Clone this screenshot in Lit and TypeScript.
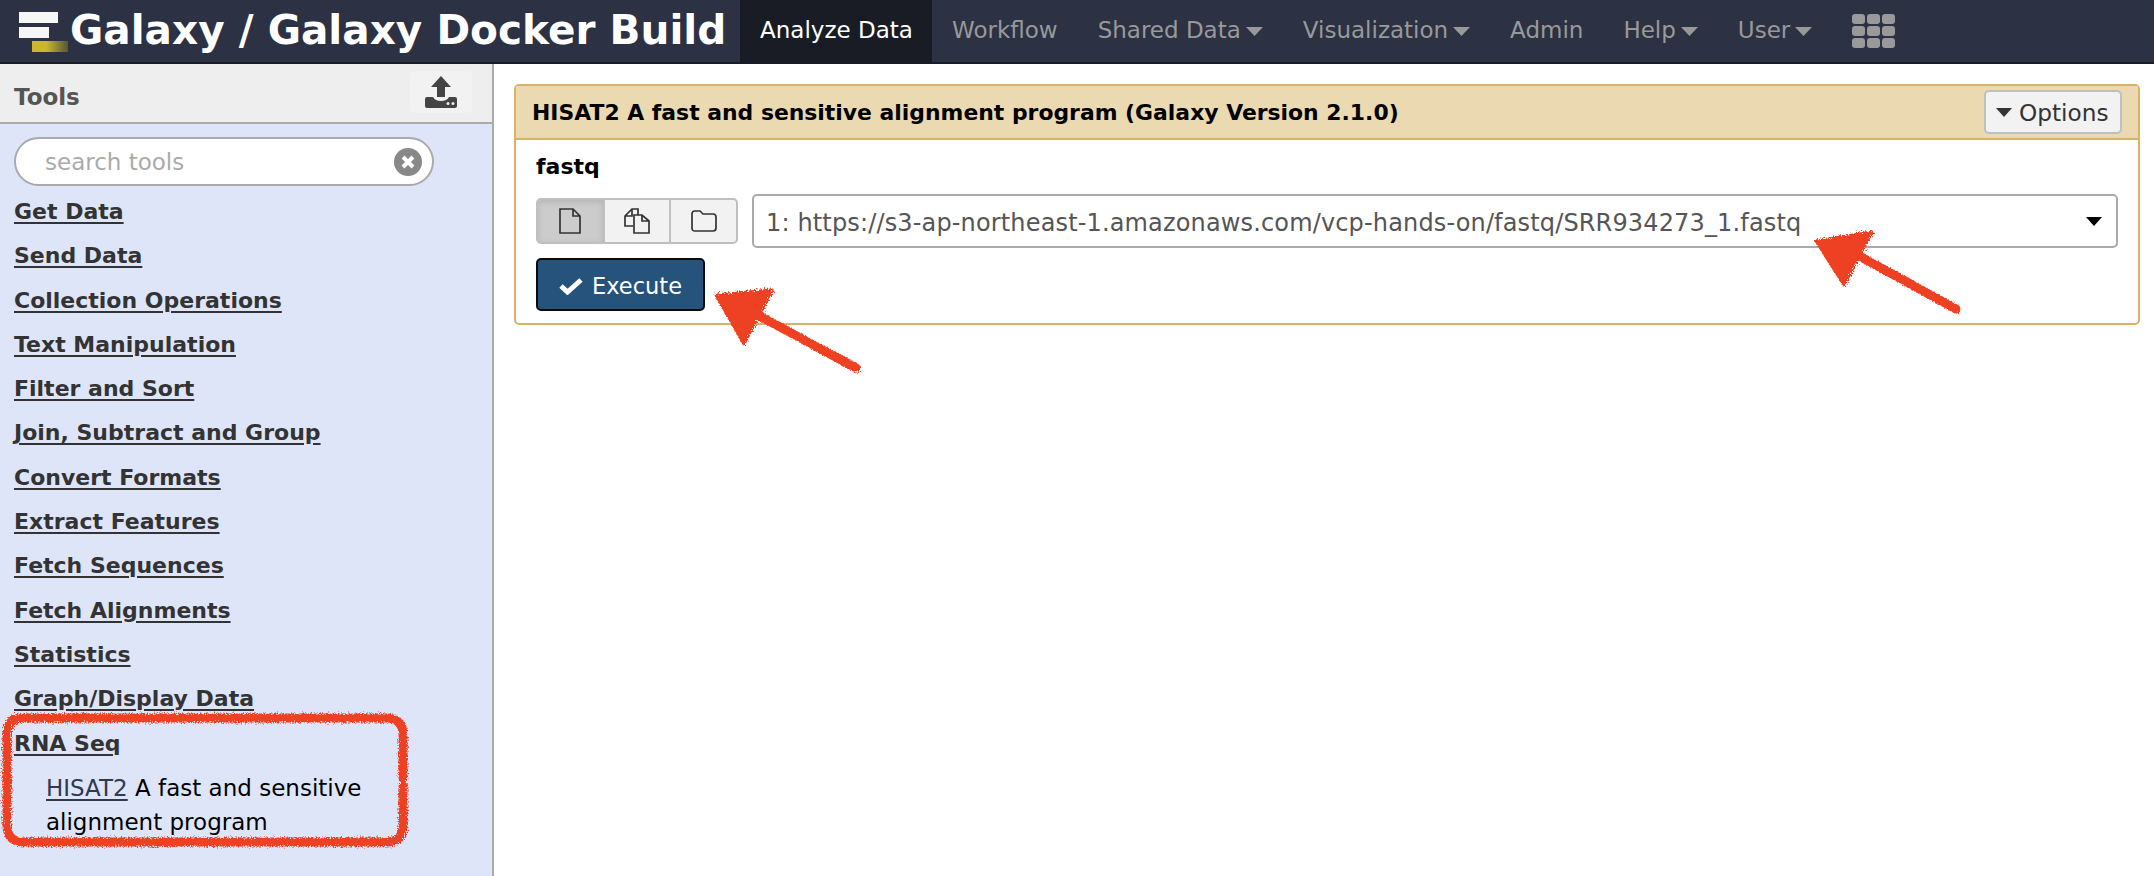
import { LitElement, html, css, svg } from 'lit';
import { customElement } from 'lit/decorators.js';

const SECTIONS = [
  'Get Data',
  'Send Data',
  'Collection Operations',
  'Text Manipulation',
  'Filter and Sort',
  'Join, Subtract and Group',
  'Convert Formats',
  'Extract Features',
  'Fetch Sequences',
  'Fetch Alignments',
  'Statistics',
  'Graph/Display Data',
  'RNA Seq',
];

const caret = html`<svg class="caret" width="17" height="9" viewBox="0 0 17 9"><path d="M0 0h17L8.5 9z" /></svg>`;

@customElement('app-root')
export class AppRoot extends LitElement {
  static styles = css`
    :host {
      display: block;
      position: relative;
      width: 2154px;
      height: 876px;
      overflow: hidden;
      background: #fff;
      font-family: 'DejaVu Sans', sans-serif;
      color: #000;
    }

    /* top bar */
    .nav {
      display: flex;
      align-items: stretch;
      height: 64px;
      background: #2c3143;
      border-bottom: 2px solid #1a1c25;
      box-sizing: border-box;
    }
    .brand {
      display: flex;
      align-items: center;
      width: 740px;
      padding: 0 0 2px 18px;
      box-sizing: border-box;
      color: #fff;
      font-size: 40.6px;
      font-weight: 700;
      white-space: nowrap;
    }
    .logo {
      flex: none;
      margin-top: 2px;
    }
    .tab {
      display: flex;
      align-items: center;
      gap: 5px;
      padding-bottom: 2px;
      font-size: 23px;
      color: #999;
      white-space: nowrap;
    }
    .tab.active {
      background: #1a1c25;
      color: #fff;
      padding: 0 20px 2px;
      width: 192px;
      box-sizing: border-box;
    }
    .tab svg.caret {
      fill: #999;
      margin-top: 2px;
    }
    .menus {
      display: flex;
      gap: 40px;
      padding-left: 20px;
    }
    .apps {
      display: grid;
      grid-template-columns: repeat(3, 13px);
      grid-auto-rows: 10px;
      gap: 2px;
      align-self: center;
    }
    .apps i {
      background: #999;
      border-radius: 3px;
    }

    /* body */
    .body {
      display: flex;
      height: 812px;
    }
    .side {
      flex: none;
      width: 494px;
      box-sizing: border-box;
      background: #dfe5f9;
      border-right: 2px solid #aaa;
    }
    .side-head {
      display: flex;
      align-items: center;
      justify-content: space-between;
      height: 60px;
      box-sizing: border-box;
      padding: 0 20px 0 14px;
      background: #eee;
      border-bottom: 2px solid #aaa;
      font-size: 23px;
      font-weight: 700;
      color: #555;
    }
    .side-head span {
      margin-top: 7px;
    }
    .upload {
      display: flex;
      align-items: center;
      justify-content: center;
      width: 62px;
      height: 42px;
      background: #f2f2f2;
      border-radius: 5px;
      margin-top: -2px;
    }
    .search {
      display: flex;
      align-items: center;
      justify-content: space-between;
      width: 420px;
      height: 49px;
      margin: 13px 0 0 14px;
      padding: 0 10px 0 29px;
      box-sizing: border-box;
      background: #fff;
      border: 2px solid #aaa;
      border-radius: 25px;
      font-size: 23px;
      color: #aaa;
    }
    .tools {
      padding: 0 14px;
      margin-top: 4px;
    }
    .section {
      height: 44.3px;
      line-height: 44.3px;
      font-size: 22px;
      font-weight: 700;
      color: #333;
    }
    .section span,
    .tool a {
      text-decoration: underline;
      text-underline-offset: 3px;
    }
    .tool {
      width: 360px;
      padding-left: 32px;
      font-size: 23px;
      line-height: 34px;
      margin-top: 5px;
    }
    .tool a {
      color: #303a4f;
    }

    /* main panel */
    .main {
      flex: 1;
      padding: 20px 14px 0 20px;
    }
    .panel {
      height: 241px;
      box-sizing: border-box;
      border: 2px solid #d8b365;
      border-radius: 5px;
    }
    .panel-head {
      display: flex;
      align-items: center;
      justify-content: space-between;
      height: 54px;
      box-sizing: border-box;
      padding: 0 16px;
      background: #ebd9b2;
      border-bottom: 2px solid #d8b365;
      font-size: 21.9px;
      font-weight: 700;
    }
    .options {
      display: flex;
      align-items: center;
      gap: 7px;
      width: 138px;
      height: 44px;
      box-sizing: border-box;
      padding-left: 10px;
      background: #f2f2f2;
      border: 2px solid #bfbfbf;
      border-radius: 5px;
      font-size: 23.2px;
      font-weight: 400;
      color: #333;
    }
    .panel-body {
      padding: 12px 20px 0;
    }
    .label {
      font-size: 22px;
      font-weight: 700;
      line-height: 30px;
    }
    .row {
      display: flex;
      align-items: center;
      gap: 14px;
      margin-top: 12px;
    }
    .group {
      display: flex;
      width: 202px;
      height: 46px;
      box-sizing: border-box;
      background: #f2f2f2;
      border: 2px solid #bfbfbf;
      border-radius: 5px;
      overflow: hidden;
    }
    .group div {
      flex: 1;
      display: flex;
      align-items: center;
      justify-content: center;
      border-left: 2px solid #bfbfbf;
    }
    .group div:first-child {
      border-left: 0;
      background: #ccc;
      box-shadow: inset 0 2px 6px rgba(0, 0, 0, 0.12);
    }
    .select {
      display: flex;
      flex: 1;
      align-items: center;
      justify-content: space-between;
      height: 54px;
      box-sizing: border-box;
      padding: 0 14px 0 12px;
      background: #fff;
      border: 2px solid #aaa;
      border-radius: 5px;
      font-size: 24px;
      letter-spacing: 0.15px;
      color: #555;
    }
    .select span {
      margin-top: 4px;
    }
    .execute {
      display: flex;
      align-items: center;
      justify-content: center;
      gap: 9px;
      width: 169px;
      height: 53px;
      box-sizing: border-box;
      margin-top: 10px;
      padding-top: 2px;
      background: #25537b;
      border: 2px solid #0a0a0a;
      border-radius: 5px;
      color: #fff;
      font-size: 22.5px;
      font-weight: 400;
    }

    /* hand-drawn marks over the page */
    .marks {
      position: absolute;
      inset: 0;
      pointer-events: none;
    }
  `;

  private marks() {
    return svg`
      <defs>
        <filter id="rough" x="-5%" y="-5%" width="110%" height="110%">
          <feTurbulence type="fractalNoise" baseFrequency="0.7" numOctaves="2" seed="4" />
          <feDisplacementMap in="SourceGraphic" scale="7" />
        </filter>
      </defs>
      <g filter="url(#rough)" fill="#ee4023" stroke="#ee4023" stroke-linecap="round" stroke-linejoin="round">
        <path d="M716 295L772 290L744 344Z" stroke-width="3" />
        <path d="M752 312L856 368" stroke-width="9" fill="none" />
        <path d="M1816 241L1872 232L1844 285Z" stroke-width="3" />
        <path d="M1852 252L1956 309" stroke-width="9" fill="none" />
        <path d="M403 778V735Q403 718 386 718H22Q7 718 7 735V825Q7 842 24 842H386Q403 842 403 825V786"
          stroke-width="9" fill="none" />
      </g>
    `;
  }

  render() {
    return html`
      <div class="nav">
        <div class="brand">
          <svg class="logo" width="52" height="44" viewBox="0 0 52 44">
            <defs>
              <linearGradient id="fade">
                <stop offset="0.4" stop-color="#c9b632" />
                <stop offset="1" stop-color="#57553a" />
              </linearGradient>
            </defs>
            <g style="filter: blur(0.7px)">
              <rect x="1" y="3" width="39" height="11" fill="#f6f6f6" />
              <rect x="1" y="18" width="30" height="11" fill="#f6f6f6" />
              <rect x="14" y="32" width="36" height="11" fill="url(#fade)" />
            </g>
          </svg>
          <span>Galaxy / Galaxy Docker Build</span>
        </div>
        <div class="tab active">Analyze Data</div>
        <div class="menus">
          <div class="tab">Workflow</div>
          <div class="tab">Shared Data${caret}</div>
          <div class="tab">Visualization${caret}</div>
          <div class="tab">Admin</div>
          <div class="tab">Help${caret}</div>
          <div class="tab">User${caret}</div>
          <div class="apps">${Array.from({ length: 9 }, () => html`<i></i>`)}</div>
        </div>
      </div>
      <div class="body">
        <div class="side">
          <div class="side-head">
            <span>Tools</span>
            <div class="upload">
              <svg width="32" height="32" viewBox="0 0 32 32" fill="#444">
                <path d="M16 0L26 11H20V21H12V11H6Z" />
                <path d="M2 21H8Q10 25 16 25Q22 25 24 21H30Q32 21 32 23V30Q32 32 30 32H2Q0 32 0 30V23Q0 21 2 21Z" />
                <circle cx="23" cy="27.5" r="1.5" fill="#eee" />
                <circle cx="28" cy="27.5" r="1.5" fill="#eee" />
              </svg>
            </div>
          </div>
          <div class="search">
            <span>search tools</span>
            <svg width="28" height="28" viewBox="0 0 28 28">
              <circle cx="14" cy="14" r="14" fill="#888" />
              <path d="M9 9L19 19M19 9L9 19" stroke="#fff" stroke-width="4" />
            </svg>
          </div>
          <div class="tools">
            ${SECTIONS.map((s) => html`<div class="section"><span>${s}</span></div>`)}
            <div class="tool">
              <div><a>HISAT2</a> <span>A fast and sensitive</span></div>
              <div>alignment program</div>
            </div>
          </div>
        </div>
        <div class="main">
          <div class="panel">
            <div class="panel-head">
              <span>HISAT2 A fast and sensitive alignment program (Galaxy Version 2.1.0)</span>
              <div class="options">
                <svg width="16" height="9" viewBox="0 0 16 9" fill="#333"><path d="M0 0h16L8 9z" /></svg>
                Options
              </div>
            </div>
            <div class="panel-body">
              <div class="label">fastq</div>
              <div class="row">
                <div class="group">
                  <div>
                    <svg width="24" height="28" viewBox="0 0 24 28" fill="none" stroke="#333" stroke-width="1.7">
                      <path d="M2 2H15L22 9V26H2ZM15 2V9H22" />
                    </svg>
                  </div>
                  <div>
                    <svg width="28" height="28" viewBox="0 0 28 28" fill="none" stroke="#333" stroke-width="1.7">
                      <path d="M10 19H2V9L9 2H15V8M9 2V9H2" />
                      <path d="M11 8H19L26 14V26H11ZM19 8V14H26" />
                    </svg>
                  </div>
                  <div>
                    <svg width="26" height="22" viewBox="0 0 26 22" fill="none" stroke="#333" stroke-width="1.7">
                      <path d="M1 4Q1 1 4 1H9L12 4H22Q25 4 25 7V18Q25 21 22 21H4Q1 21 1 18Z" />
                    </svg>
                  </div>
                </div>
                <div class="select">
                  <span>1: https://s3-ap-northeast-1.amazonaws.com/vcp-hands-on/fastq/SRR934273_1.fastq</span>
                  <svg width="16" height="9" viewBox="0 0 16 9"><path d="M0 0h16L8 9z" /></svg>
                </div>
              </div>
              <div class="execute">
                <svg width="24" height="18" viewBox="0 0 24 18" fill="none" stroke="#fff" stroke-width="5">
                  <path d="M2 9L8.5 15L22 3" />
                </svg>
                Execute
              </div>
            </div>
          </div>
        </div>
      </div>
      <svg class="marks" width="2154" height="876">${this.marks()}</svg>
    `;
  }
}
